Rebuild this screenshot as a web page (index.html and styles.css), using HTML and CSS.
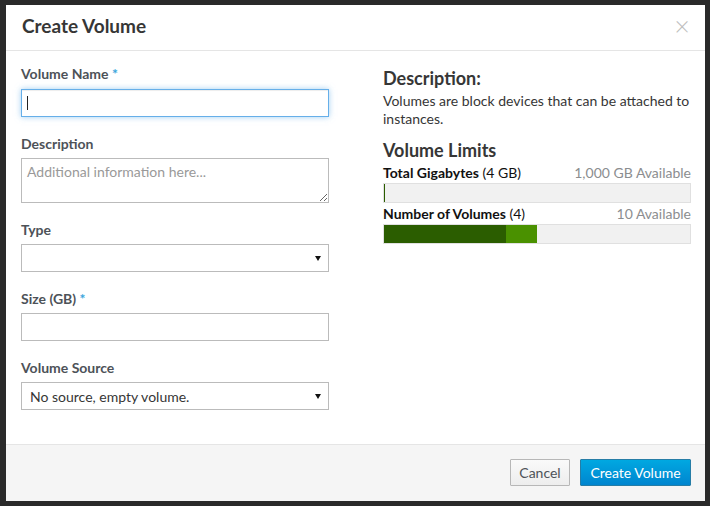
FILE: index.html
```html
<!DOCTYPE html>
<html>
<head>
<meta charset="utf-8">
<link rel="stylesheet" href="styles.css">
</head>
<body>
<div class="modal">
  <div class="modal-header">
    <h2 class="modal-title">Create Volume</h2>
    <span class="close">&times;</span>
  </div>
  <div class="modal-body">
    <form class="left-col">
      <div class="form-group">
        <label class="label">Volume Name <span class="req">*</span></label>
        <span class="input-wrap caret"><input class="control focused" type="text"></span>
      </div>
      <div class="form-group">
        <label class="label">Description</label>
        <textarea class="control textarea" placeholder="Additional information here..."></textarea>
      </div>
      <div class="form-group">
        <label class="label">Type</label>
        <span class="select-wrap"><select class="control select"><option></option></select></span>
      </div>
      <div class="form-group">
        <label class="label">Size (GB) <span class="req">*</span></label>
        <input class="control" type="text">
      </div>
      <div class="form-group">
        <label class="label">Volume Source</label>
        <span class="select-wrap"><select class="control select"><option>No source, empty volume.</option></select></span>
      </div>
    </form>
    <div class="right-col">
      <h3 class="heading">Description:</h3>
      <p class="desc">Volumes are block devices that can be attached to instances.</p>
      <h3 class="heading limits">Volume Limits</h3>
      <div class="quota">
        <div class="quota-row"><span><strong>Total Gigabytes</strong> (4 GB)</span><span class="avail">1,000 GB Available</span></div>
        <div class="bar"><div class="used" style="width:0.4%"></div></div>
      </div>
      <div class="quota">
        <div class="quota-row"><span><strong>Number of Volumes</strong> (4)</span><span class="avail">10 Available</span></div>
        <div class="bar"><div class="used" style="width:40%"></div><div class="adding" style="width:10%"></div></div>
      </div>
    </div>
  </div>
  <div class="modal-footer">
    <button class="btn btn-default" type="button">Cancel</button>
    <button class="btn btn-primary" type="button">Create Volume</button>
  </div>
</div>
</body>
</html>
```

FILE: styles.css
```css
* { box-sizing: border-box; }
html, body { margin: 0; padding: 0; }
body {
  background: #2a2a2a;
  font-family: Lato, "Open Sans", sans-serif;
  font-size: 14px;
  color: #363636;
  width: 710px;
  height: 506px;
  padding: 5px 5px 0 6px;
}
.modal {
  width: 699px;
  height: 496px;
  background: #fff;
  display: flex;
  flex-direction: column;
}
.modal-header {
  height: 46px;
  border-bottom: 1px solid #e5e5e5;
  display: flex;
  align-items: center;
  justify-content: space-between;
  padding: 0 15px 3px 16px;
}
.modal-title {
  margin: 0;
  font-size: 19px;
  font-weight: 700;
  color: #363636;
  line-height: 20px;
}
.close {
  font-size: 27px;
  line-height: 20px;
  color: #bdbdbd;
  font-weight: 300;
  margin-right: 0;
}
.modal-body {
  flex: 1;
  display: flex;
  gap: 54px;
  padding: 15px 14px 0 15px;
}
.left-col { width: 308px; margin: 0; }
.right-col { width: 308px; }
.form-group { margin-bottom: 18px; display: flex; flex-direction: column; }
.label {
  font-weight: 700;
  font-size: 14px;
  line-height: 18px;
  color: #4d5258;
  margin-bottom: 5px;
}
.form-group:first-child .label { margin-top: -1px; margin-bottom: 6px; }
.req { color: #39a5dc; }
.control {
  display: block;
  width: 308px;
  height: 28px;
  border: 1px solid #bbb;
  background: #fff;
  font-family: Lato, "Open Sans", sans-serif;
  font-size: 14px;
  color: #363636;
  padding: 0 8px;
  margin: 0;
  outline: none;
  border-radius: 0;
}
.focused {
  border-color: #66afe9;
  box-shadow: inset 0 1px 1px rgba(0,0,0,.075), 0 0 6px rgba(102,175,233,.6);
  caret-color: transparent;
}
.input-wrap { position: relative; display: block; }
.caret::after {
  content: "";
  position: absolute;
  left: 6px;
  top: 7px;
  width: 1px;
  height: 14px;
  background: #222;
}
.textarea {
  height: 45px;
  padding: 5px 5px;
  resize: vertical;
  line-height: 16px;
}
.textarea::placeholder { color: #999; }
.select-wrap { position: relative; display: block; }
.select {
  appearance: none;
  -webkit-appearance: none;
  padding-left: 8px;
}
.select-wrap::after {
  content: "";
  position: absolute;
  right: 8px;
  top: 12px;
  border-left: 3px solid transparent;
  border-right: 3px solid transparent;
  border-top: 5px solid #111;
}
.heading {
  margin: 2px 0 4px;
  font-size: 18px;
  font-weight: 700;
  line-height: 20px;
  color: #363636;
}
.limits { margin-top: 12px; margin-bottom: 4px; }
.desc { margin: 0; line-height: 18px; }
.quota { margin-bottom: 2px; }
.quota-row {
  display: flex;
  justify-content: space-between;
  font-size: 14px;
  line-height: 18px;
  margin-bottom: 1px;
  color: #111;
}
.quota-row strong { font-weight: 700; }
.avail { color: #8b8d8f; }
.bar {
  height: 20px;
  background: #f1f1f1;
  border: 1px solid #e0e0e0;
  display: flex;
}
.used { background: #2b5d00; height: 18px; min-width: 1px; }
.adding { background: #4a9100; height: 18px; }
.modal-footer {
  height: 57px;
  border-top: 1px solid #e5e5e5;
  background: #f5f5f5;
  display: flex;
  justify-content: flex-end;
  align-items: center;
  gap: 10px;
  padding: 0 14px 1px 0;
}
.btn {
  height: 27px;
  font-family: Lato, "Open Sans", sans-serif;
  font-size: 14px;
  padding: 0 6px;
  border-radius: 1px;
  margin: 0;
}
.btn-default {
  background: linear-gradient(#fafafa, #ededed);
  border: 1px solid #b7b7b7;
  color: #4d5258;
  width: 60px;
}
.btn-primary {
  background: linear-gradient(#00a8e1, #0085cf);
  border: 1px solid #267da6;
  color: #fff;
  width: 111px;
}
```
